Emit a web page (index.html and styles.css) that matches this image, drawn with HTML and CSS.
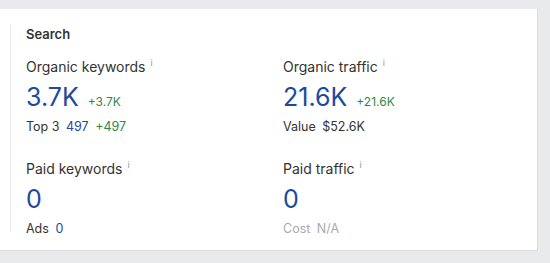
FILE: index.html
```html
<!DOCTYPE html>
<html lang="en">
<head>
    <meta charset="UTF-8">
    <title>Search overview</title>
    <link rel="stylesheet" href="styles.css">
</head>
<body>
    <div class="card">
        <div class="section">
            <h3 class="section-title">Search</h3>
            <div class="metrics">
                <div class="metric">
                    <div class="metric-label">Organic keywords <span class="info">i</span></div>
                    <div class="metric-value">3.7K <span class="delta">+3.7K</span></div>
                    <div class="metric-sub">Top 3 <span class="num">497</span> <span class="delta">+497</span></div>
                </div>
                <div class="metric">
                    <div class="metric-label">Organic traffic <span class="info">i</span></div>
                    <div class="metric-value">21.6K <span class="delta">+21.6K</span></div>
                    <div class="metric-sub">Value <span class="plain">$52.6K</span></div>
                </div>
                <div class="metric">
                    <div class="metric-label">Paid keywords <span class="info">i</span></div>
                    <div class="metric-value">0</div>
                    <div class="metric-sub">Ads <span class="num">0</span></div>
                </div>
                <div class="metric">
                    <div class="metric-label">Paid traffic <span class="info">i</span></div>
                    <div class="metric-value">0</div>
                    <div class="metric-sub muted">Cost <span>N/A</span></div>
                </div>
            </div>
        </div>
    </div>
</body>
</html>
```

FILE: styles.css
```css
body {
    margin: 0;
    background: #e9eaec;
    font-family: Inter, "Liberation Sans", Arial, sans-serif;
    color: #333;
}

.card {
    margin-top: 9px;
    width: 537px;
    height: 226px;
    background: white;
    border-right: 1px solid #dcdde0;
    border-bottom: 1px solid #dcdde0;
    padding-top: 15px;
}

.section {
    margin-left: 10px;
    height: 208px;
    border-left: 1px solid #ececec;
    padding: 2px 0 0 15px;
    box-sizing: border-box;
}

.section-title {
    margin: 0 0 15px;
    font-size: 13px;
    line-height: 16px;
    font-weight: 600;
    color: #333;
}

.metrics {
    display: grid;
    grid-template-columns: 257px 257px;
    row-gap: 23px;
}

.metric-label {
    font-size: 14px;
    line-height: 20px;
    height: 20px;
    color: #333;
}

.info {
    font-size: 9px;
    line-height: 0;
    color: #999;
    position: relative;
    top: -6px;
    margin-left: 1px;
}

.metric-value {
    margin-top: 5px;
    font-size: 25px;
    line-height: 30px;
    height: 30px;
    color: #1d4a9e;
}

.metric-value .delta {
    font-size: 12px;
    line-height: 0;
    margin-left: 2px;
}

.delta {
    color: #2b8a4b;
}

.metric-sub {
    margin-top: 6px;
    font-size: 12.5px;
    line-height: 18px;
    height: 18px;
    color: #333;
}

.metric-sub span {
    margin-left: 3px;
}

.num {
    color: #1d4a9e;
}

.metric-sub.muted {
    color: #aaa;
}
```
